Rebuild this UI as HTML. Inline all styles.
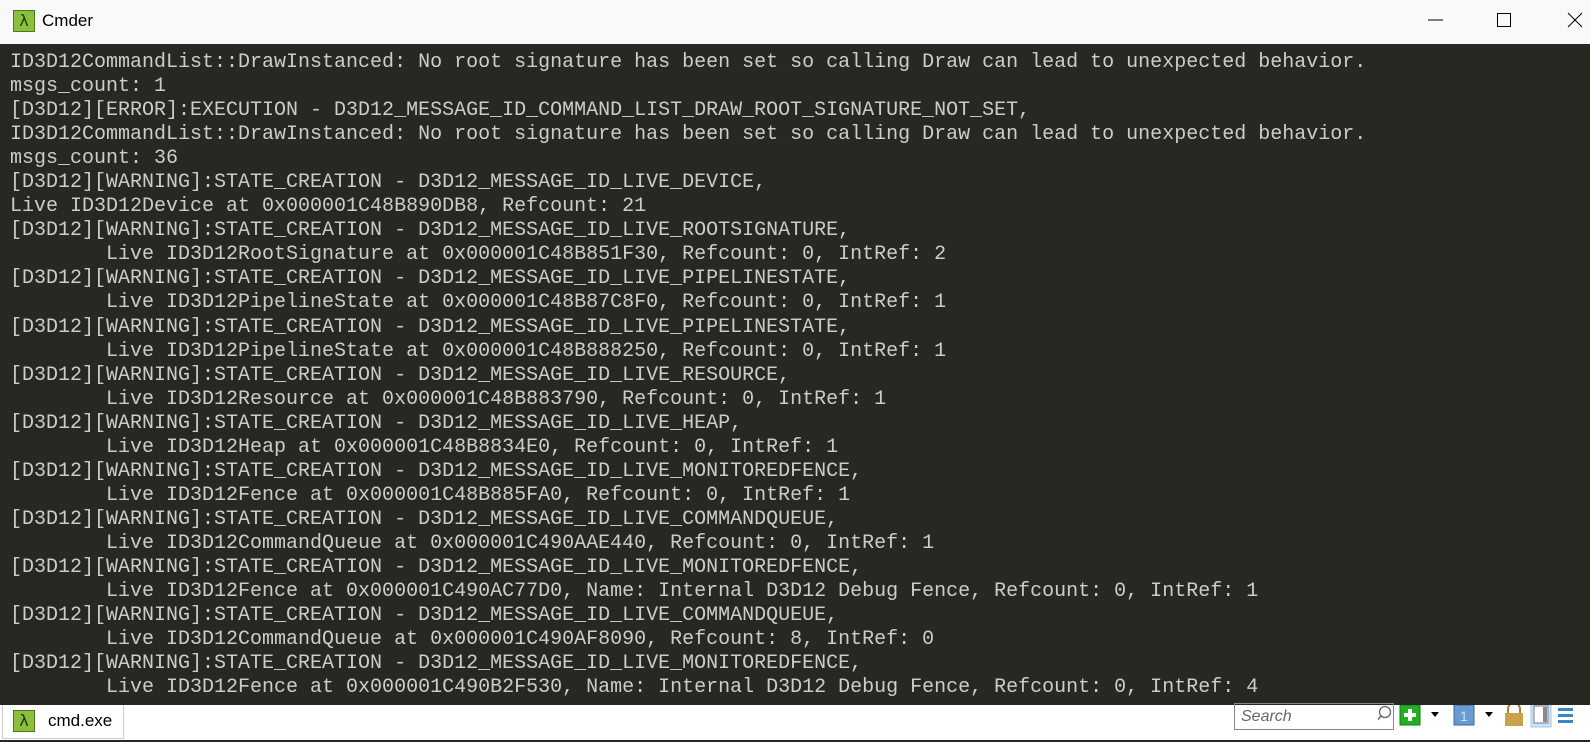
<!DOCTYPE html>
<html><head><meta charset="utf-8"><style>
html,body{margin:0;padding:0;width:1590px;height:742px;overflow:hidden;background:#272822;}
.title{position:absolute;left:0;top:0;width:1590px;height:44px;background:#f9f9f9;}
.title .lam{position:absolute;left:13px;top:10px;width:22px;height:22px;background:#8cbf3f;border:1px solid #4c7a1a;box-sizing:border-box;color:#1c3a08;font:16px "DejaVu Sans",sans-serif;text-align:center;line-height:20px;}
.title .t{position:absolute;left:42px;top:11px;font:17px "Liberation Sans",sans-serif;color:#000;}
.term{position:absolute;left:10px;top:51px;font-family:"Liberation Mono",monospace;font-size:20px;line-height:24.05px;color:#cccccc;white-space:pre;}
.bar{position:absolute;left:0;top:705px;width:1590px;height:35px;background:#fff;}
.tab{position:absolute;left:2px;top:0;width:122px;height:34px;border:1px solid #ccc;border-top:none;box-sizing:border-box;}
.tab .lam{position:absolute;left:10px;top:5px;width:22px;height:22px;background:#8cbf3f;border:1px solid #4c7a1a;box-sizing:border-box;color:#1c3a08;font:16px "DejaVu Sans",sans-serif;text-align:center;line-height:20px;}
.tab .t{position:absolute;left:45px;top:6px;font:17px "Liberation Sans",sans-serif;color:#000;}
.search{position:absolute;left:1234px;top:-2px;width:160px;height:27px;border:1px solid #888;box-sizing:border-box;font:italic 16px "Liberation Sans",sans-serif;color:#666;padding:4px 6px;}
</style></head><body>
<div class="title"><div class="lam">λ</div><div class="t">Cmder</div>
<svg style="position:absolute;left:1400px;top:12px" width="190" height="20">
<line x1="28" y1="8" x2="43" y2="8" stroke="#000" stroke-width="1"/>
<rect x="97.5" y="1.5" width="13" height="13" fill="none" stroke="#000"/>
<line x1="168" y1="1" x2="182" y2="15" stroke="#000"/><line x1="182" y1="1" x2="168" y2="15" stroke="#000"/>
</svg></div>
<div class="term">ID3D12CommandList::DrawInstanced: No root signature has been set so calling Draw can lead to unexpected behavior.
msgs_count: 1
[D3D12][ERROR]:EXECUTION - D3D12_MESSAGE_ID_COMMAND_LIST_DRAW_ROOT_SIGNATURE_NOT_SET,
ID3D12CommandList::DrawInstanced: No root signature has been set so calling Draw can lead to unexpected behavior.
msgs_count: 36
[D3D12][WARNING]:STATE_CREATION - D3D12_MESSAGE_ID_LIVE_DEVICE,
Live ID3D12Device at 0x000001C48B890DB8, Refcount: 21
[D3D12][WARNING]:STATE_CREATION - D3D12_MESSAGE_ID_LIVE_ROOTSIGNATURE,
        Live ID3D12RootSignature at 0x000001C48B851F30, Refcount: 0, IntRef: 2
[D3D12][WARNING]:STATE_CREATION - D3D12_MESSAGE_ID_LIVE_PIPELINESTATE,
        Live ID3D12PipelineState at 0x000001C48B87C8F0, Refcount: 0, IntRef: 1
[D3D12][WARNING]:STATE_CREATION - D3D12_MESSAGE_ID_LIVE_PIPELINESTATE,
        Live ID3D12PipelineState at 0x000001C48B888250, Refcount: 0, IntRef: 1
[D3D12][WARNING]:STATE_CREATION - D3D12_MESSAGE_ID_LIVE_RESOURCE,
        Live ID3D12Resource at 0x000001C48B883790, Refcount: 0, IntRef: 1
[D3D12][WARNING]:STATE_CREATION - D3D12_MESSAGE_ID_LIVE_HEAP,
        Live ID3D12Heap at 0x000001C48B8834E0, Refcount: 0, IntRef: 1
[D3D12][WARNING]:STATE_CREATION - D3D12_MESSAGE_ID_LIVE_MONITOREDFENCE,
        Live ID3D12Fence at 0x000001C48B885FA0, Refcount: 0, IntRef: 1
[D3D12][WARNING]:STATE_CREATION - D3D12_MESSAGE_ID_LIVE_COMMANDQUEUE,
        Live ID3D12CommandQueue at 0x000001C490AAE440, Refcount: 0, IntRef: 1
[D3D12][WARNING]:STATE_CREATION - D3D12_MESSAGE_ID_LIVE_MONITOREDFENCE,
        Live ID3D12Fence at 0x000001C490AC77D0, Name: Internal D3D12 Debug Fence, Refcount: 0, IntRef: 1
[D3D12][WARNING]:STATE_CREATION - D3D12_MESSAGE_ID_LIVE_COMMANDQUEUE,
        Live ID3D12CommandQueue at 0x000001C490AF8090, Refcount: 8, IntRef: 0
[D3D12][WARNING]:STATE_CREATION - D3D12_MESSAGE_ID_LIVE_MONITOREDFENCE,
        Live ID3D12Fence at 0x000001C490B2F530, Name: Internal D3D12 Debug Fence, Refcount: 0, IntRef: 4</div>
<div class="bar">
<div class="tab"><div class="lam">λ</div><div class="t">cmd.exe</div></div>
<div class="search">Search</div>
<svg style="position:absolute;left:1378px;top:0" width="212" height="30">
<circle cx="7" cy="7" r="5.5" fill="none" stroke="#666" stroke-width="1.3"/><line x1="3" y1="11" x2="-3" y2="18" stroke="#666" stroke-width="1.5"/>
<rect x="22" y="0" width="20" height="20" fill="#22b022" stroke="#157a15"/><rect x="30" y="4" width="4" height="12" fill="#fff"/><rect x="26" y="8" width="12" height="4" fill="#fff"/>
<polygon points="53,7 61,7 57,12" fill="#000"/>
<rect x="76" y="0" width="20" height="20" fill="#6a9bd0" stroke="#3b6aa0"/><text x="82" y="16" font-family="Liberation Sans" font-size="14" fill="#cfe0f5">1</text>
<polygon points="107,7 115,7 111,12" fill="#000"/>
<rect x="127" y="8" width="18" height="13" fill="#c9a24a"/><path d="M130 8 V4 a6 6 0 0 1 12 0 V8" fill="none" stroke="#a68236" stroke-width="2"/>
<rect x="153" y="-2" width="20" height="24" fill="#cde4f7" stroke="#99c4ec"/><rect x="156" y="1" width="14" height="17" fill="#fff" stroke="#777"/><rect x="165" y="2" width="4" height="15" fill="#888"/>
<rect x="180" y="3" width="15" height="3" fill="#3b85c6"/><rect x="180" y="9" width="15" height="3" fill="#3b85c6"/><rect x="180" y="15" width="15" height="3" fill="#3b85c6"/>
</svg>
</div>
</body></html>
